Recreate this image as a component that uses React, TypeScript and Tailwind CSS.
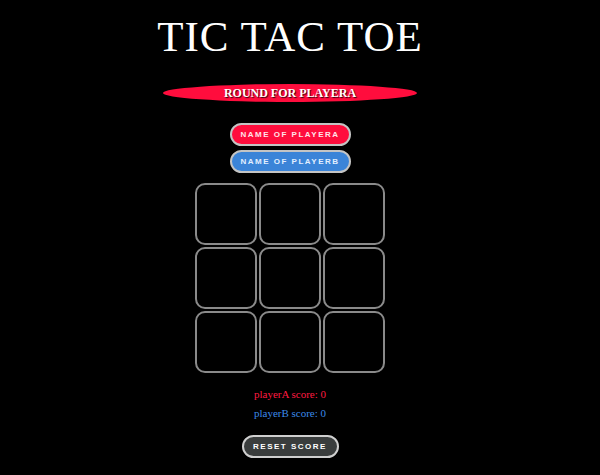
import React, { useState } from 'react';

export default function App() {
  const [board, setBoard] = useState<string[]>(Array(9).fill(''));
  const [scoreA, setScoreA] = useState(0);
  const [scoreB, setScoreB] = useState(0);

  return (
    <div className="min-h-[475px] w-full bg-black">
      <div className="w-[580px] flex flex-col items-center">
        <h1 className="mt-[13px] text-[43px] leading-[48px] text-white tracking-[1px] font-['Liberation_Serif',serif]">
          TIC TAC TOE
        </h1>

        <div className="mt-[23px] w-[254px] h-[18px] rounded-[50%] bg-[#ff0d3d] flex items-center justify-center">
          <span className="text-[12px] font-bold text-white font-['Liberation_Serif',serif] [text-shadow:1px_1px_1px_#3a0010]">
            ROUND FOR PLAYERA
          </span>
        </div>

        <button className="mt-[21px] w-[121px] h-[23px] rounded-full bg-[#ff0d3d] border-2 border-[#c4c4c4] text-[#ffe3e9] text-[8px] font-bold tracking-[1.5px] font-['Liberation_Sans',sans-serif]">
          NAME OF PLAYERA
        </button>
        <button className="mt-[4px] w-[121px] h-[23px] rounded-full bg-[#3b84d8] border-2 border-[#c4c4c4] text-[#e2efff] text-[8px] font-bold tracking-[1.5px] font-['Liberation_Sans',sans-serif]">
          NAME OF PLAYERB
        </button>

        <div className="mt-[10px] grid grid-cols-[62px_62px_62px] grid-rows-[62px_62px_62px] gap-[2px]">
          {board.map((v, i) => (
            <div
              key={i}
              onClick={() => {
                const b = [...board];
                b[i] = 'X';
                setBoard(b);
              }}
              className="rounded-[10px] border-2 border-[#8a8a8a] bg-black text-white"
            >
              {v}
            </div>
          ))}
        </div>

        <p className="mt-[13px] text-[11px] leading-[16px] text-[#ff1a40] font-['Liberation_Serif',serif]">
          playerA score: {scoreA}
        </p>
        <p className="mt-[3px] text-[11px] leading-[16px] text-[#3b8ae8] font-['Liberation_Serif',serif]">
          playerB score: {scoreB}
        </p>

        <button
          onClick={() => {
            setScoreA(0);
            setScoreB(0);
          }}
          className="mt-[14px] w-[97px] h-[23px] rounded-full bg-[#3a3d3d] border-2 border-[#cfcfcf] text-white text-[8px] font-bold tracking-[1.5px] font-['Liberation_Sans',sans-serif]"
        >
          RESET SCORE
        </button>
      </div>
    </div>
  );
}
